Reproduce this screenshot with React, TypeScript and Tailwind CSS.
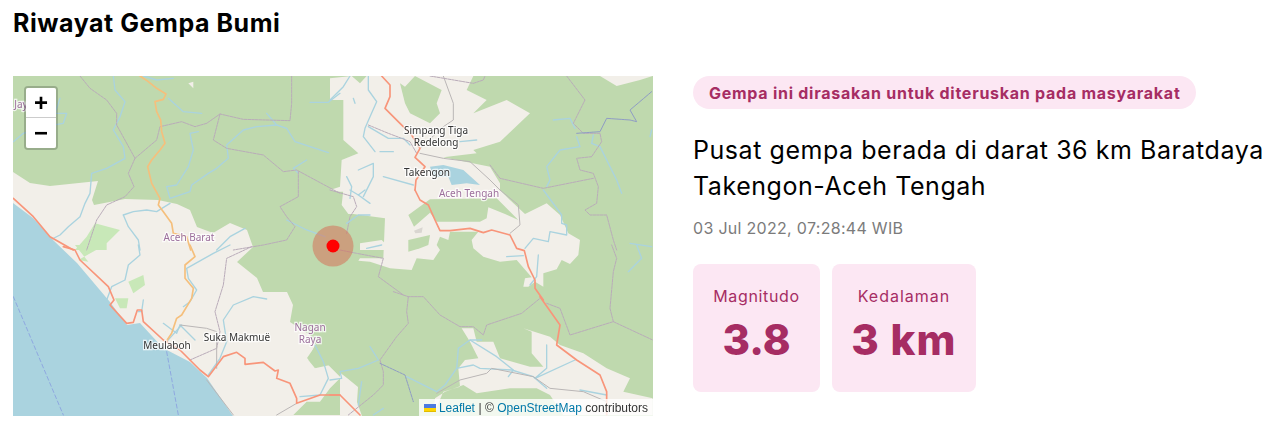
const LAND = "#f2efe9";
const FOREST = "#bfd9ae";
const PARK = "#c8e8b8";
const WATER = "#aad3df";
const ROAD = "#f8957a";
const SEC = "#f5bf7c";
const BOUND = "#b9abb9";
const GRAY = "#bab6b6";

function P({ d, c, w = 4, dash }: { d: string; c: string; w?: number; dash?: string }) {
  return <polyline points={d} fill="none" stroke={c} strokeWidth={w} strokeDasharray={dash} strokeLinejoin="round" strokeLinecap="round" />;
}
function Label({ x, y, c = "#333", t }: { x: number; y: number; c?: string; t: string }) {
  return (
    <text x={x} y={y} textAnchor="middle" fill={c} stroke="#ffffff" strokeOpacity={0.75} strokeWidth={2.5} paintOrder="stroke" fontSize={10} fontFamily="'Noto Sans', sans-serif">
      {t}
    </text>
  );
}

const rivers1 = [
  "340,18 345,60 375,95 360,140 340,180 370,230 375,265 320,295 275,310 270,370 255,400 240,440 205,470 180,495 150,510",
  "505,85 550,125 605,130",
  "800,130 830,165 770,170 730,180 680,225 685,265 650,295 625,310 575,345 570,365 510,385 500,350 530,345 565,290 580,240 570,190 595,185",
  "830,165 860,175 885,215 985,248",
  "920,270 880,295 895,310",
  "930,97 985,97 1020,70",
  "180,85 165,130 200,130 190,160 130,170 70,190 40,215",
  "370,435 400,425 440,420 470,425 510,400",
  "370,435 385,470 415,510 420,540",
  "860,450 920,480 975,500",
  "650,540 690,500 735,475",
  "430,18 470,30 520,25",
];
const rivers2 = [
  "0,90 40,50 60,18", "70,85 75,100",
  "115,18 115,60 140,95 120,140 105,175 100,200 135,245",
  "115,170 175,205 220,205 240,225", "150,245 190,245",
  "85,300 130,280 130,320 100,380", "160,320 250,345", "50,320 65,350 60,385", "390,215 440,210",
  "810,230 860,330 875,370", "790,195 785,220 810,230",
  "740,200 750,230 690,240 650,290 660,330 650,350", "670,150 720,145 735,175",
  "900,520 965,530", "960,200 965,180",
];
const rivers3 = [
  "415,0 420,30 385,60 375,105 335,125 320,165", "430,165 425,200 415,200",
  "490,235 530,265 540,240 585,285", "500,290 545,240",
  "690,0 640,25 560,70 565,100 590,135 570,170 550,185",
  "800,162 760,155 700,180 670,225 680,290 660,340 625,390",
  "945,300 970,350 985,400 960,450 900,455",
];
const rivers4 = [
  "920,0 935,40 895,80",
  "650,300 650,370 615,400 735,345", "120,305 145,345 85,370 30,380 35,400 0,405",
  "95,410 85,480", "160,490 130,510",
  "455,285 420,285 385,310 380,370 345,420 320,440 230,395",
  "420,285 500,335 550,375 535,395", "380,370 430,360 450,370 545,375 610,395 650,430",
  "750,435 830,450",
];
const rivers5 = [
  "610,0 665,75 665,100 680,105 680,135 630,125 625,155 580,145 555,175",
  "500,200 550,197", "595,195 590,260 570,285", "80,175 125,165",
  "20,100 55,75 90,75", "30,0 55,15 75,0", "55,15 90,40",
];

export default function App() {
  return (
    <div className="bg-white min-h-[432px] pl-[13px] pt-[5px] font-['Inter',sans-serif]">
      <h1 className="text-[25px] leading-[36px] font-bold text-black tracking-[0.55px]">Riwayat Gempa Bumi</h1>
      <div className="mt-[35px] flex gap-[40px] items-start">
        <div className="relative w-[640px] h-[340px] overflow-hidden shrink-0">
          <svg viewBox="13 76 640 340" width="640" height="340" className="block">
            <rect x="13" y="76" width="640" height="340" fill={FOREST} />
            <g className="blur-[0.35px]">
              <polygon fill={LAND} points="13,172 30,183 50,186 98,181 92,200 94,205 125,199 158,200 177,204 190,210 197,227 213,233 230,223 247,230 253,247 237,262 257,278 263,292 287,292 293,305 290,322 310,335 316,345 307,358 316,368 330,365 347,378 358,387 357,402 362,416 13,416" />
              <g transform="translate(0 245) scale(.33333)">
                <polygon fill={FOREST} points="1020,400 990,430 960,470 920,470 880,510 1020,510" />
                <polygon fill={FOREST} points="1020,300 945,300 925,345 945,370 975,350 1020,395" />
                <polygon fill={PARK} points="225,0 265,50 235,45 315,0" />
                <polygon fill={PARK} points="385,110 430,90 435,120 400,145" />
                <polygon fill={PARK} points="345,160 385,160 380,190 360,190" />
              </g>
              <g transform="translate(0 70) scale(.33333)">
                <polygon fill={PARK} points="225,540 260,500 285,460 360,480 320,520 320,540" />
                <polygon fill={LAND} points="565,40 580,35 580,55" />
              </g>
              <polygon fill={WATER} points="13,203 33,218 53,240 77,263 110,302 127,325 140,323 163,348 190,362 207,378 233,416 13,416" />
              <g transform="translate(330 70) scale(.33333)">
                <polygon fill={LAND} points="0,25 0,90 40,90 40,210 85,250 35,270 30,350 0,360 30,365 510,365 510,340 480,290 340,262 440,250 430,240 510,215 600,130 530,90 430,130 470,90 410,60 430,18 110,18 90,40 65,18" />
                <polygon fill={FOREST} points="255,18 225,50 210,40 225,100 240,130 300,160 330,130 320,100 335,60" />
                <polygon fill={LAND} points="810,18 860,48 930,30 968,18" />
                <polygon fill={WATER} points="300,290 340,285 400,300 450,345 410,340 365,345 355,320 310,320" />
              </g>
              <g transform="translate(340 190) scale(.33333)">
                <polygon fill={LAND} points="10,0 480,0 510,30 555,72 620,40 660,75 685,130 720,150 715,195 690,222 665,210 650,238 610,250 610,290 585,275 565,290 550,290 555,265 575,262 530,210 480,215 430,200 400,175 395,150 415,125 330,125 325,150 300,140 290,165 300,180 280,210 230,205 215,240 150,235 90,215 55,212 60,205 130,205 135,85 40,72 25,72 5,45" />
                <polygon fill={FOREST} points="270,28 470,25 535,90 495,72 445,52 440,85 420,95 290,95 270,68 222,110 205,75" />
                <polygon fill={FOREST} points="205,150 270,135 265,165 240,175 205,185" />
                <polygon fill={LAND} points="60,160 125,150 135,160 135,180 60,180" />
                <polygon fill="#d9d6d1" points="222,122 248,112 245,128 226,130" />
              </g>
              <g transform="translate(330 70) scale(.33333)">
                {rivers2.map((d) => <P key={d} d={d} c={WATER} />)}
                <P d="115,165 175,190 215,205 240,215 260,250" c={BOUND} w={3} dash="8 3" />
                <P d="0,360 70,380 80,410 60,440 50,490" c={BOUND} w={3} dash="8 3" />
                <P d="340,18 370,100 370,150 340,170 270,235" c={GRAY} w={3} />
                <P d="270,250 340,265 420,275 480,330 510,360" c={GRAY} w={3} />
                <P d="300,18 430,40 460,30 465,18" c={BOUND} w={3} dash="8 3" />
                <P d="710,18 765,90 730,160 760,190 810,190 815,215 785,260 740,265 750,300 790,310 805,350 800,400 765,420 780,435 830,435 850,510 860,540" c={BOUND} w={3} dash="8 3" />
                <P d="480,285 510,325 640,355 790,325" c={BOUND} w={3} dash="8 3" />
                <P d="740,190 810,185 830,145 900,150 920,155 900,120 965,65" c="#8f9cc4" w={3} dash="8 2" />
                <P d="155,18 180,45 180,80 165,115 210,160 245,195 270,235 255,262 285,290 258,330 255,360" c={ROAD} w={5} />
              </g>
              <g transform="translate(330 245) scale(.33333)">
                <polygon fill={LAND} points="395,250 430,250 440,290 490,290 510,340 600,365 640,365 605,325 605,260 580,250 660,275 690,300 760,325 830,370 900,400 880,440 968,460 968,510 700,510 660,450 620,430 540,430 440,445 400,420 345,440 315,460 310,510 340,440 390,425 385,370 405,345 445,340 420,290" />
                {rivers4.map((d) => <P key={d} d={d} c={WATER} />)}
                <P d="190,140 235,155 280,155 330,210 390,245 430,245 460,270 470,240 575,205 630,160" c={BOUND} w={3} dash="8 3" />
                <P d="235,155 230,200 235,235 200,275 150,345 160,380 160,420 130,450 55,510" c={BOUND} w={3} dash="8 3" />
                <P d="650,175 690,190 720,270 850,230 968,285" c={BOUND} w={3} dash="8 3" />
                <P d="850,230 840,190 850,80 860,40 845,0" c={BOUND} w={3} dash="8 3" />
                <P d="150,355 225,390 250,470" c="#8f9cc4" w={3} dash="8 3" />
                <P d="320,445 390,405 470,385 485,370 610,395 660,430 760,440 830,470" c={GRAY} w={3} />
                <P d="630,155 690,240 680,300 740,345 810,390 830,440 830,510" c={ROAD} w={5} />
                <P d="0,450 30,450 90,510" c={ROAD} w={5} />
              </g>
              <g transform="translate(340 190) scale(.33333)">
                {rivers5.map((d) => <P key={d} d={d} c={WATER} />)}
                <P d="0,180 50,190 130,205 115,260 190,315" c={BOUND} w={3} dash="8 3" />
                <P d="480,0 535,45 540,105 510,130" c={GRAY} w={3} />
                <P d="225,0 240,30 265,45 285,90 300,122 330,122 390,115 430,128 455,120 510,135 530,175 553,182 565,230 585,270 585,295 610,330" c={ROAD} w={5} />
              </g>
              <g transform="translate(0 70) scale(.33333)">
                {rivers1.map((d) => <P key={d} d={d} c={WATER} />)}
                <P d="240,18 270,55 320,90 350,130 350,165 405,265 385,310 402,350 375,380 320,405 290,450 260,540" c={BOUND} w={3} dash="8 3" />
                <P d="405,265 470,210 480,170 545,155 585,170 620,160 660,132 730,148 870,152 875,100 875,18" c={BOUND} w={3} dash="8 3" />
                <P d="660,132 640,210 680,235 790,255 850,305 890,300 1020,370" c={BOUND} w={3} dash="8 3" />
                <P d="895,305 895,380 840,410 860,440 885,470 860,510 790,525 700,540" c={BOUND} w={3} dash="8 3" />
                <P d="420,18 445,35 470,55 498,72 490,88 465,95 470,125 482,150 485,185 495,220 480,240 455,270 443,290 455,340 480,385 475,405 490,425 515,460 520,490 560,500 572,540" c={SEC} w={5} />
                <P d="40,385 100,440 150,500 220,540" c={ROAD} w={5} />
              </g>
              <g transform="translate(0 245) scale(.33333)">
                {rivers3.map((d) => <P key={d} d={d} c={WATER} />)}
                <P d="755,5 680,40 670,120 645,200 660,260 650,310 570,345" c={BOUND} w={3} dash="8 3" />
                <P d="540,240 620,250 650,260 650,370" c={GRAY} w={3} />
                <P d="620,405 700,510" c={GRAY} w={3} />
                <P d="830,510 890,475" c={GRAY} w={3} />
                <P d="40,155 190,510" c="#8fa8e0" w={3} dash="12 8" />
                <P d="500,320 535,510" c="#8fa8e0" w={3} dash="12 8" />
                <P d="570,0 585,35 555,60 555,100 580,130 575,160 545,210 530,220 515,265 498,290" c={SEC} w={5} />
                <P d="190,5 225,15 240,45 325,125 342,165 330,180 380,235 400,232 412,195 425,195 430,230 490,285 540,315 600,375 625,395 670,335 710,322 735,340 735,358 790,352 825,378 835,375 830,400 870,415 890,460 890,475 960,450 1020,450" c={ROAD} w={5} />
              </g>
            </g>
            <Label x={436} y={134} t="Simpang Tiga" />
            <Label x={436} y={146} t="Redelong" />
            <Label x={427} y={176} t="Takengon" />
            <Label x={469} y={197} c="#9c6f9c" t="Aceh Tengah" />
            <Label x={189} y={241} c="#9c6f9c" t="Aceh Barat" />
            <Label x={310} y={331} c="#9c6f9c" t="Nagan" />
            <Label x={310} y={343} c="#9c6f9c" t="Raya" />
            <Label x={167} y={349} t="Meulaboh" />
            <Label x={237} y={341} t="Suka Makmuë" />
            <Label x={21} y={108} c="#9c6f9c" t="Jay" />
            <circle cx="333" cy="246" r="20.5" fill="#d8674f" fillOpacity="0.5" />
            <circle cx="333" cy="246" r="6.5" fill="#ff0000" />
          </svg>
          <div className="absolute left-[11px] top-[10px] w-[34px] rounded-[4px] border-2 border-black/20 bg-clip-padding">
            <div className="h-[30px] bg-white rounded-t-[2px] border-b border-[#ccc] flex items-center justify-center text-black text-[24px] font-bold font-['Liberation_Sans',sans-serif] leading-[30px]">+</div>
            <div className="h-[30px] bg-white rounded-b-[2px] flex items-center justify-center text-black text-[24px] font-bold font-['Liberation_Sans',sans-serif] leading-[30px]">−</div>
          </div>
          <div className="absolute right-0 bottom-0 h-[17px] pl-[5px] pr-[5px] bg-white/80 flex items-center text-[12px] text-[#333] font-['Liberation_Sans',sans-serif] whitespace-nowrap">
            <svg width="12" height="8" viewBox="0 0 12 8" className="mr-[3px]">
              <path fill="#4C7BE1" d="M0 0h12v4H0z" />
              <path fill="#FFD500" d="M0 4h12v3H0z" />
              <path fill="#E0BC00" d="M0 7h12v1H0z" />
            </svg>
            <span className="text-[#0078a8]">Leaflet</span>
            <span className="mx-[3.5px]">|</span>
            <span>©&nbsp;</span>
            <span className="text-[#0078a8]">OpenStreetMap</span>
            <span>&nbsp;contributors</span>
          </div>
        </div>
        <div className="flex flex-col items-start min-w-0">
          <div className="h-[33px] w-[503px] rounded-full bg-[#fce7f3] text-[#a62d63] text-[16px] font-bold flex items-center pl-[16px] whitespace-nowrap tracking-[0.74px]">
            Gempa ini dirasakan untuk diteruskan pada masyarakat
          </div>
          <div className="mt-[23px] text-[25px] leading-[36px] text-black w-[580px] tracking-[0.55px]">
            Pusat gempa berada di darat 36 km Baratdaya Takengon-Aceh Tengah
          </div>
          <div className="mt-[12px] text-[16px] leading-[24px] text-[#7b7b7b] tracking-[0.3px]">03 Jul 2022, 07:28:44 WIB</div>
          <div className="mt-[24px] flex gap-[12px]">
            <div className="w-[127px] h-[128px] rounded-[8px] bg-[#fce7f3] flex flex-col items-center pt-[20px] text-[#a62d63]">
              <div className="text-[16px] leading-[24px] tracking-[0.65px]">Magnitudo</div>
              <div className="text-[42px] leading-[60px] font-extrabold mt-[2px]">3.8</div>
            </div>
            <div className="w-[144px] h-[128px] rounded-[8px] bg-[#fce7f3] flex flex-col items-center pt-[20px] text-[#a62d63]">
              <div className="text-[16px] leading-[24px] tracking-[1px]">Kedalaman</div>
              <div className="text-[42px] leading-[60px] font-extrabold mt-[2px] tracking-[1.2px]">3 km</div>
            </div>
          </div>
        </div>
      </div>
    </div>
  );
}
